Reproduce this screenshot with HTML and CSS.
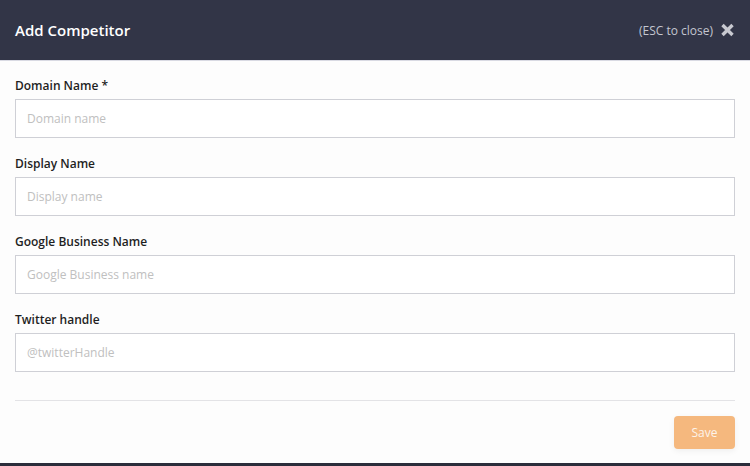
FILE: index.html
```html
<!DOCTYPE html>
<html lang="en">
<head>
  <meta charset="UTF-8">
  <title>Add Competitor</title>
  <link rel="stylesheet" href="styles.css">
</head>
<body>
  <div class="modal">
    <header class="modal-header">
      <h1>Add Competitor</h1>
      <div class="close">
        <span>(ESC to close)</span>
        <svg width="15" height="14" viewBox="0 0 15 14">
          <path d="M2.5 2 L12.5 12 M12.5 2 L2.5 12" stroke="#c8c9d0" stroke-width="3.4" stroke-linecap="butt"/>
        </svg>
      </div>
    </header>

    <form class="modal-body">
      <div class="field">
        <label>Domain Name *</label>
        <input type="text" placeholder="Domain name">
      </div>
      <div class="field">
        <label>Display Name</label>
        <input type="text" placeholder="Display name">
      </div>
      <div class="field">
        <label>Google Business Name</label>
        <input type="text" placeholder="Google Business name">
      </div>
      <div class="field">
        <label>Twitter handle</label>
        <input type="text" placeholder="@twitterHandle">
      </div>

      <hr class="divider">

      <div class="actions">
        <button type="button" class="save">Save</button>
      </div>
    </form>
  </div>
</body>
</html>
```

FILE: styles.css
```css
* {
  box-sizing: border-box;
}
body {
  margin: 0;
  font-family: 'Open Sans', sans-serif;
  background: #2b2d3b;
  color: #222;
}
.modal {
  background: #fdfdfd;
  height: 463px;
}
.modal-header {
  background: #323547;
  height: 61px;
  padding: 0 15px;
  display: flex;
  justify-content: space-between;
  align-items: center;
  border-bottom: 1px solid #d9dae3;
}
.modal-header h1 {
  margin: 0;
  font-size: 15px;
  font-weight: 600;
  color: #fff;
}
.close {
  display: flex;
  align-items: center;
  gap: 7px;
  color: #c4c6d0;
  font-size: 12px;
}
.modal-body {
  padding: 16px 15px 0;
}
.field {
  margin-bottom: 17px;
}
.field label {
  display: block;
  font-size: 12px;
  font-weight: 600;
  line-height: 18px;
  margin-bottom: 4px;
  color: #1f1f1f;
}
.field input {
  display: block;
  width: 100%;
  height: 39px;
  padding: 0 11px;
  border: 1px solid #cfd0d6;
  border-radius: 0;
  background: #fff;
  font-family: inherit;
  font-size: 12px;
  color: #333;
}
.field input::placeholder {
  color: #c0c0c0;
}
.divider {
  border: 0;
  border-top: 1px solid #e3e3e6;
  margin: 28px 0 15px;
}
.actions {
  display: flex;
  justify-content: flex-end;
}
.save {
  width: 61px;
  height: 33px;
  border: 0;
  border-radius: 4px;
  background: #f5b87e;
  color: #fdf3ea;
  font-family: inherit;
  font-size: 12px;
  box-shadow: 0 2px 6px rgba(0,0,0,0.06);
}
```
